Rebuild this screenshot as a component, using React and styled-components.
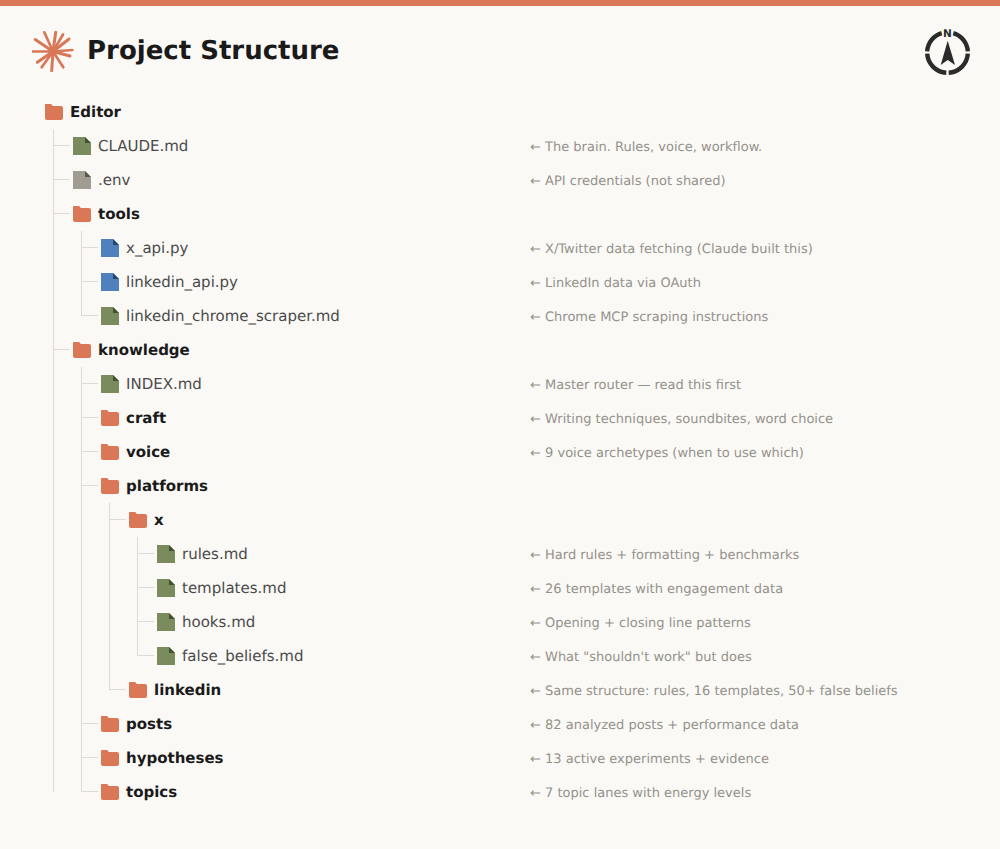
import React from "react";
import styled, { createGlobalStyle } from "styled-components";

const Global = createGlobalStyle`
  html, body { margin: 0; padding: 0; background: #faf9f6; }
  body { font-family: "DejaVu Sans", sans-serif; text-rendering: geometricPrecision; }
`;

const Page = styled.div`
  width: 1000px;
  height: 849px;
  overflow: hidden;
  background: #faf9f6;
  border-top: 6px solid #d97757;
  box-sizing: border-box;
`;

const Header = styled.header`
  display: flex;
  align-items: center;
  justify-content: space-between;
  height: 48px;
  padding: 21px 30px 0 32px;
`;

const Brand = styled.div`
  display: flex;
  align-items: center;
  gap: 13px;
`;

const Title = styled.h1`
  margin: 0;
  font-size: 26px;
  font-weight: 700;
  line-height: 32px;
  color: #1a1a1a;
`;

const Tree = styled.div`
  padding: 20px 0 0 45px;
`;

const Children = styled.div`
  position: relative;
  margin-left: 8px;
  padding-left: 20px;
  &::before {
    content: "";
    position: absolute;
    left: 0;
    top: 0;
    bottom: 17px;
    width: 1px;
    background: #dddbd5;
  }
`;

const Row = styled.div`
  position: relative;
  display: flex;
  align-items: center;
  height: 34px;
  ${(p) =>
    p.$nested &&
    `&::before {
      content: "";
      position: absolute;
      left: -20px;
      top: 16px;
      width: 17px;
      height: 1px;
      background: #dddbd5;
    }`}
`;

const Label = styled.div`
  flex: 1;
  display: flex;
  align-items: center;
  gap: 7px;
  min-width: 0;
`;

const Name = styled.span`
  font-size: 15px;
  line-height: 20px;
  white-space: nowrap;
  font-weight: ${(p) => (p.$folder ? 700 : 400)};
  color: ${(p) => (p.$folder ? "#1a1a1a" : "#4a4a4a")};
`;

const Note = styled.span`
  flex: none;
  width: 470px;
  margin-top: 4px;
  font-size: 13px;
  line-height: 20px;
  color: #95928b;
  white-space: nowrap;
`;

const IconBox = styled.svg`
  flex: none;
  display: block;
`;

const FolderIcon = () => (
  <IconBox width="18" height="18" viewBox="0 0 18 18">
    <path
      d="M0 2C0 1.4 .4 1 1 1H6.2L7.8 3H16C17.2 3 18 3.8 18 5V15C18 16.2 17.2 17 16 17H2C.8 17 0 16.2 0 15Z"
      fill="#d97757"
    />
  </IconBox>
);

const FileIcon = ({ color, fold }) => (
  <IconBox width="18" height="18" viewBox="0 0 18 18">
    <path d="M0 0H12L18 6V18H0Z" fill={color} />
    <path d="M12 0L18 6H12Z" fill={fold} />
  </IconBox>
);

const kinds = {
  md: { color: "#7a8c5e", fold: "#44512f" },
  env: { color: "#a09b93", fold: "#5c5850" },
  py: { color: "#4f81bd", fold: "#24466f" },
};

const Node = ({ name, note, kind, nested, children }) => {
  const folder = !kind;
  return (
    <>
      <Row $nested={nested}>
        <Label>
          {folder ? <FolderIcon /> : <FileIcon {...kinds[kind]} />}
          <Name $folder={folder}>{name}</Name>
        </Label>
        {note && <Note>← {note}</Note>}
      </Row>
      {children && <Children>{children}</Children>}
    </>
  );
};

const spokes = [
  [12.3, 2.3], [23.7, 2.3], [31, 4.5], [37, 9], [40.3, 20], [38, 26],
  [31.3, 37.3], [19.7, 40.7], [9.7, 37.3], [5.3, 32.3], [0.8, 21.5], [3.2, 9.5],
];

const Sun = () => (
  <IconBox width="42" height="42" viewBox="0 0 42 42">
    {spokes.map(([x, y], i) => (
      <line
        key={i}
        x1="21"
        y1="21.5"
        x2={x}
        y2={y}
        stroke="#d97757"
        strokeWidth={i % 2 ? 3 : 2.7}
        strokeLinecap="round"
      />
    ))}
    <circle cx="21" cy="21.5" r="4.5" fill="#d97757" />
  </IconBox>
);

const Letter = styled.text`
  font-family: "DejaVu Sans", sans-serif;
  font-size: 10.5px;
  font-weight: 700;
  fill: #2b2b2b;
`;

const Compass = () => (
  <IconBox width="45" height="48" viewBox="0 0 45 48">
    <g fill="none" stroke="#2b2b2b" strokeWidth="4.4">
      <path d="M2.2 24.3A20.3 20.3 0 0 1 16.7 6.2" />
      <path d="M28.3 6.2A20.3 20.3 0 0 1 42.8 24.3" />
      <path d="M42.8 26.7A20.3 20.3 0 0 1 23.7 45.7" />
      <path d="M21.3 45.7A20.3 20.3 0 0 1 2.2 26.7" />
    </g>
    <path d="M22.7 13.7L30 38L22.7 33L15.7 38Z" fill="#2b2b2b" />
    <Letter x="22.5" y="10" textAnchor="middle">N</Letter>
  </IconBox>
);

export default function App() {
  return (
    <Page>
      <Global />
      <Header>
        <Brand>
          <Sun />
          <Title>Project Structure</Title>
        </Brand>
        <Compass />
      </Header>
      <Tree>
        <Node name="Editor">
          <Node nested kind="md" name="CLAUDE.md" note="The brain. Rules, voice, workflow." />
          <Node nested kind="env" name=".env" note="API credentials (not shared)" />
          <Node nested name="tools">
            <Node nested kind="py" name="x_api.py" note="X/Twitter data fetching (Claude built this)" />
            <Node nested kind="py" name="linkedin_api.py" note="LinkedIn data via OAuth" />
            <Node nested kind="md" name="linkedin_chrome_scraper.md" note="Chrome MCP scraping instructions" />
          </Node>
          <Node nested name="knowledge">
            <Node nested kind="md" name="INDEX.md" note="Master router — read this first" />
            <Node nested name="craft" note="Writing techniques, soundbites, word choice" />
            <Node nested name="voice" note="9 voice archetypes (when to use which)" />
            <Node nested name="platforms">
              <Node nested name="x">
                <Node nested kind="md" name="rules.md" note="Hard rules + formatting + benchmarks" />
                <Node nested kind="md" name="templates.md" note="26 templates with engagement data" />
                <Node nested kind="md" name="hooks.md" note="Opening + closing line patterns" />
                <Node nested kind="md" name="false_beliefs.md" note={'What "shouldn\'t work" but does'} />
              </Node>
              <Node nested name="linkedin" note="Same structure: rules, 16 templates, 50+ false beliefs" />
            </Node>
            <Node nested name="posts" note="82 analyzed posts + performance data" />
            <Node nested name="hypotheses" note="13 active experiments + evidence" />
            <Node nested name="topics" note="7 topic lanes with energy levels" />
          </Node>
        </Node>
      </Tree>
    </Page>
  );
}
